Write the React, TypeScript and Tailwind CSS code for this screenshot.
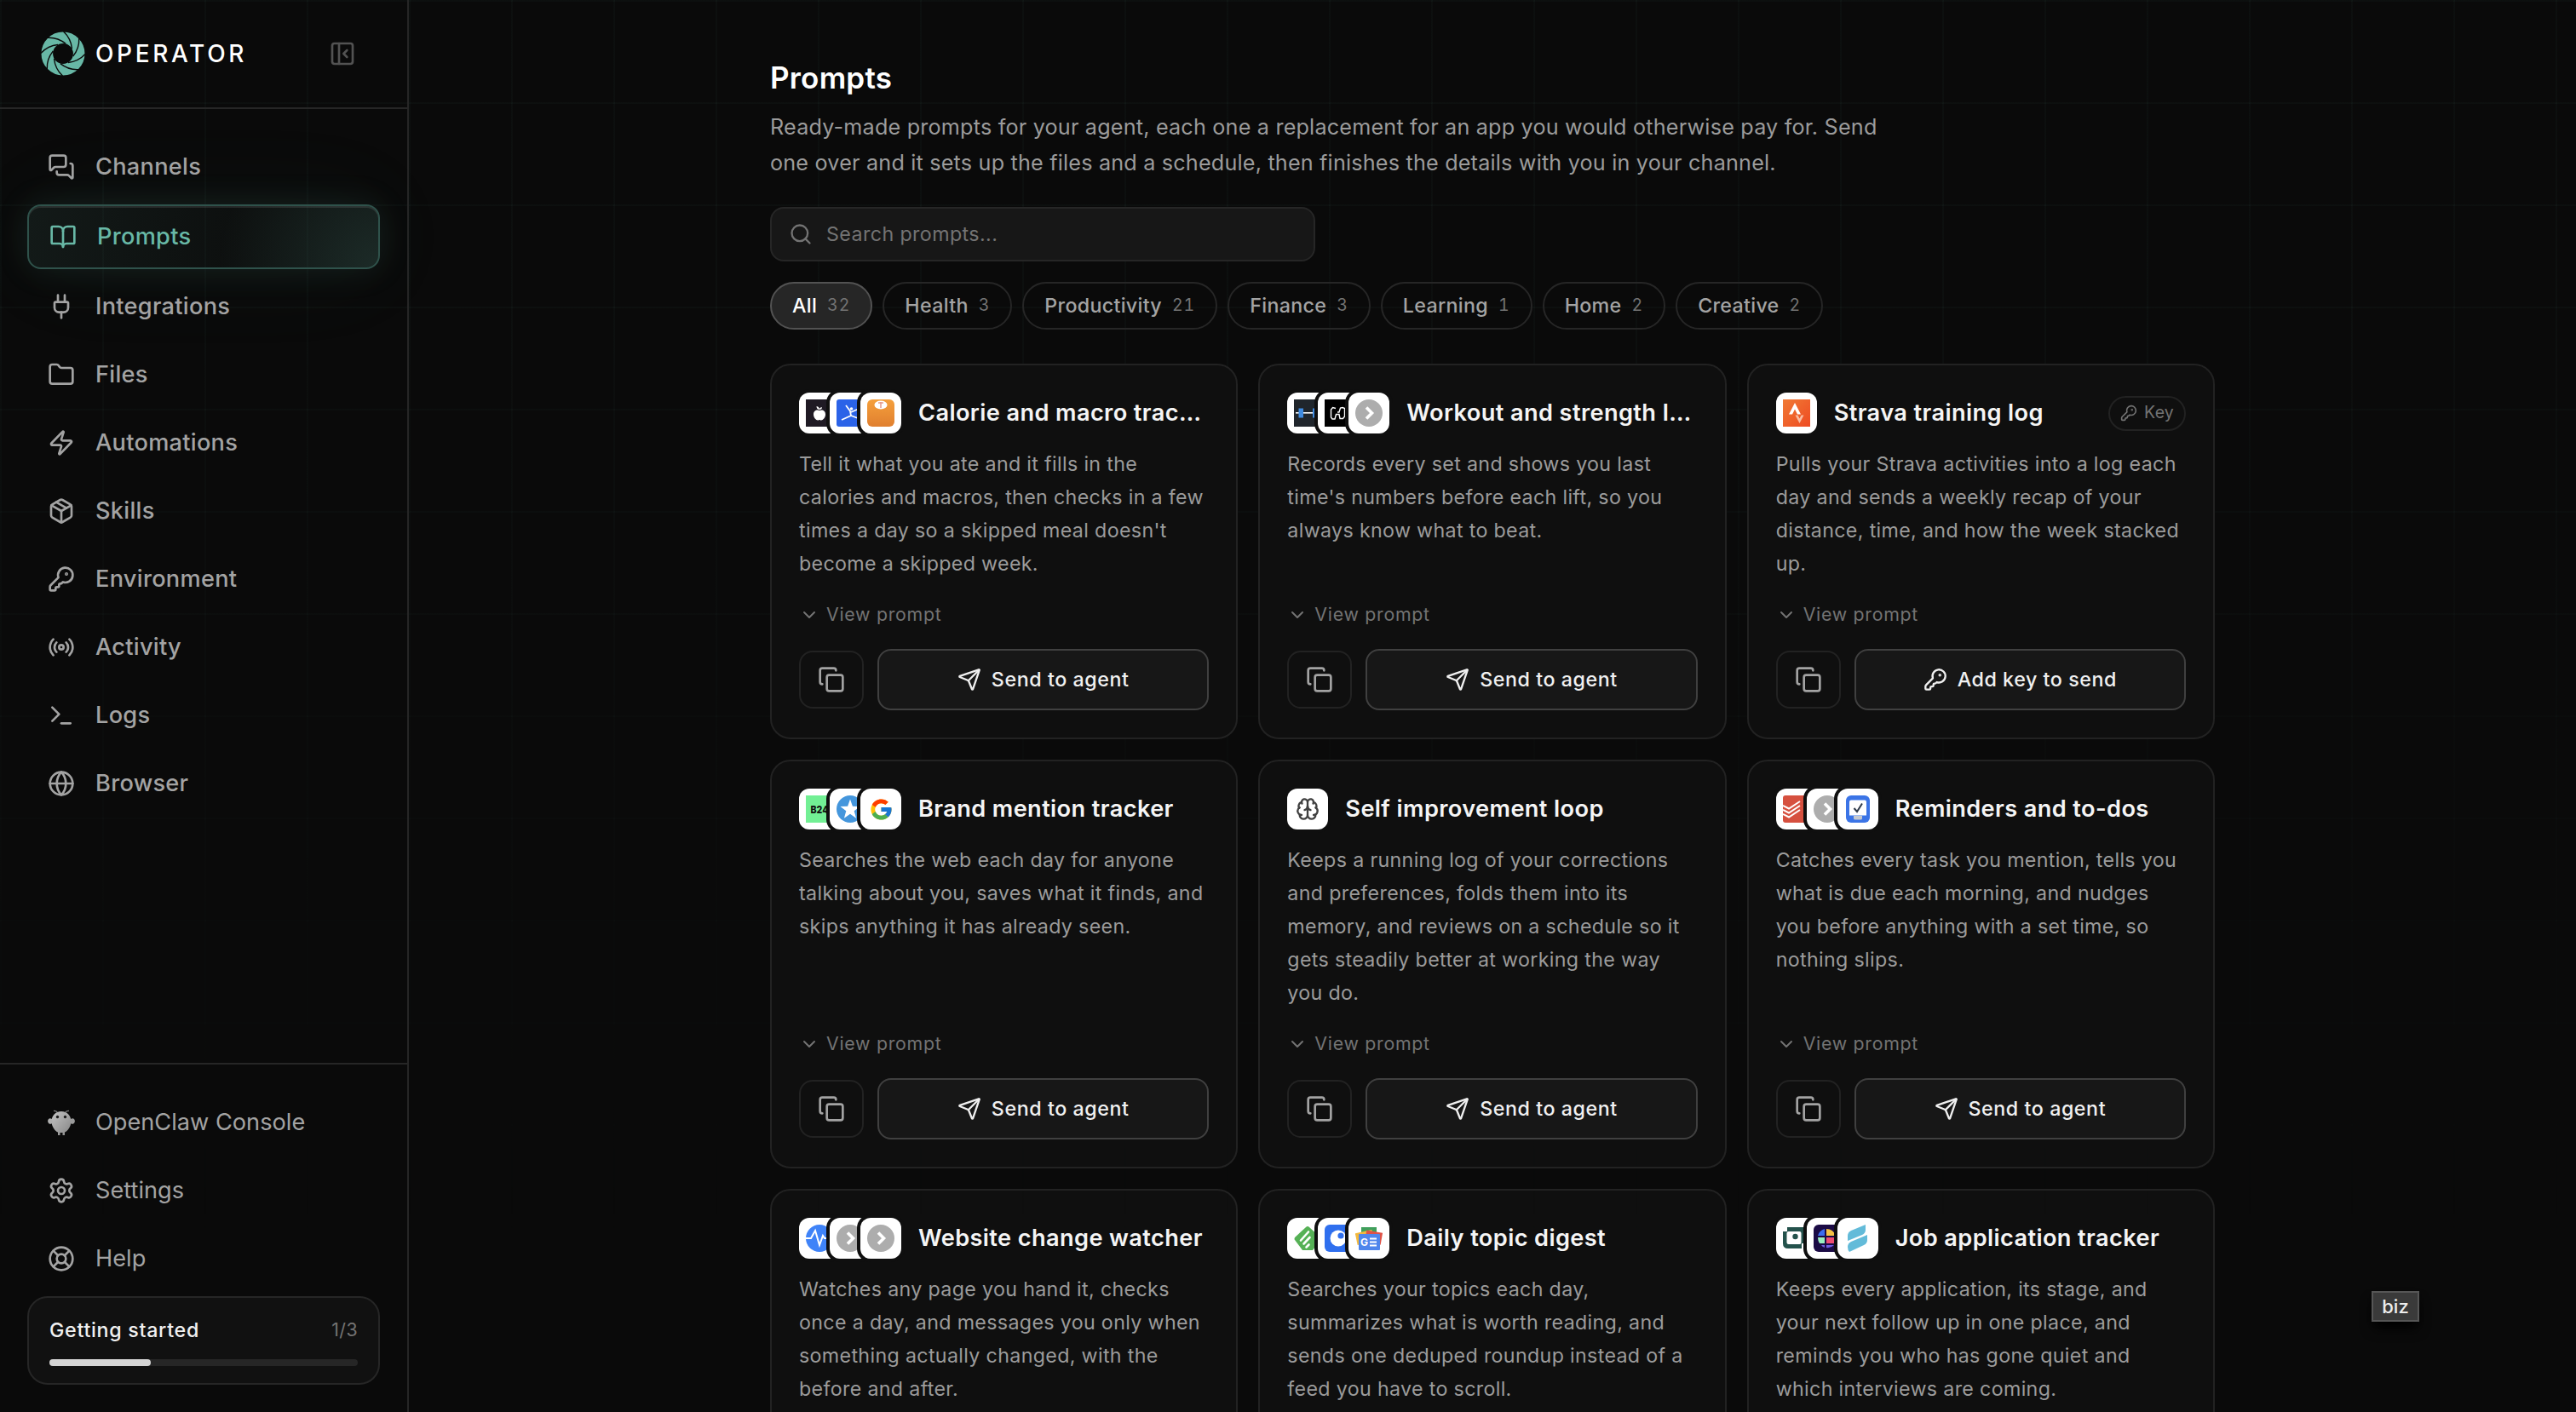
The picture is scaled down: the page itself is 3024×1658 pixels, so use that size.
import type { ComponentType, ReactNode } from 'react';
import {
  BookOpen,
  Brain,
  ChevronDown,
  Copy,
  Folder,
  Globe,
  KeyRound,
  LifeBuoy,
  MessagesSquare,
  Package,
  PanelLeftClose,
  Plug,
  Radio,
  Search,
  Send,
  Settings,
  Terminal,
  Zap,
} from 'lucide-react';
import { FcGoogle } from 'react-icons/fc';
import { clsx } from 'clsx';

type IconType = ComponentType<{ className?: string; strokeWidth?: number }>;

const navItems: { label: string; icon: IconType; active?: boolean }[] = [
  { label: 'Channels', icon: MessagesSquare },
  { label: 'Prompts', icon: BookOpen, active: true },
  { label: 'Integrations', icon: Plug },
  { label: 'Files', icon: Folder },
  { label: 'Automations', icon: Zap },
  { label: 'Skills', icon: Package },
  { label: 'Environment', icon: KeyRound },
  { label: 'Activity', icon: Radio },
  { label: 'Logs', icon: Terminal },
  { label: 'Browser', icon: Globe },
];

const footerItems: { label: string; icon: IconType }[] = [
  { label: 'OpenClaw Console', icon: ClawIcon },
  { label: 'Settings', icon: Settings },
  { label: 'Help', icon: LifeBuoy },
];

const categories = [
  { label: 'All', count: 32 },
  { label: 'Health', count: 3 },
  { label: 'Productivity', count: 21 },
  { label: 'Finance', count: 3 },
  { label: 'Learning', count: 1 },
  { label: 'Home', count: 2 },
  { label: 'Creative', count: 2 },
];

interface Prompt {
  title: string;
  description: string;
  logos: ReactNode[];
  needsKey?: boolean;
}

const prompts: Prompt[] = [
  {
    title: 'Calorie and macro tracker',
    description:
      "Tell it what you ate and it fills in the calories and macros, then checks in a few times a day so a skipped meal doesn't become a skipped week.",
    logos: [<AppleLogo />, <DancerLogo />, <ScaleLogo />],
  },
  {
    title: 'Workout and strength log',
    description:
      "Records every set and shows you last time's numbers before each lift, so you always know what to beat.",
    logos: [<DumbbellLogo />, <HevyLogo />, <FallbackLogo />],
  },
  {
    title: 'Strava training log',
    description:
      'Pulls your Strava activities into a log each day and sends a weekly recap of your distance, time, and how the week stacked up.',
    logos: [<StravaLogo />],
    needsKey: true,
  },
  {
    title: 'Brand mention tracker',
    description:
      'Searches the web each day for anyone talking about you, saves what it finds, and skips anything it has already seen.',
    logos: [<B24Logo />, <StarLogo />, <FcGoogle className="h-[29px] w-[29px]" />],
  },
  {
    title: 'Self improvement loop',
    description:
      'Keeps a running log of your corrections and preferences, folds them into its memory, and reviews on a schedule so it gets steadily better at working the way you do.',
    logos: [<Brain className="h-7 w-7 text-[#404040]" strokeWidth={2} />],
  },
  {
    title: 'Reminders and to-dos',
    description:
      'Catches every task you mention, tells you what is due each morning, and nudges you before anything with a set time, so nothing slips.',
    logos: [<TodoistLogo />, <FallbackLogo />, <ChecklistLogo />],
  },
  {
    title: 'Website change watcher',
    description:
      'Watches any page you hand it, checks once a day, and messages you only when something actually changed, with the before and after.',
    logos: [<PulseLogo />, <FallbackLogo />, <FallbackLogo />],
  },
  {
    title: 'Daily topic digest',
    description:
      'Searches your topics each day, summarizes what is worth reading, and sends one deduped roundup instead of a feed you have to scroll.',
    logos: [<FeedlyLogo />, <InoreaderLogo />, <NewsLogo />],
  },
  {
    title: 'Job application tracker',
    description:
      'Keeps every application, its stage, and your next follow up in one place, and reminds you who has gone quiet and which interviews are coming.',
    logos: [<TealLogo />, <HuntrLogo />, <SimplifyLogo />],
  },
];

export default function App() {
  return (
    <div className="relative flex h-[1658px] w-[3024px] overflow-hidden bg-[#0a0a0a] font-['Inter','Liberation_Sans',sans-serif] text-[#a3a3a3]">
      <div className="pointer-events-none absolute inset-0 bg-[linear-gradient(rgba(107,186,168,0.035)_2px,transparent_2px),linear-gradient(90deg,rgba(107,186,168,0.035)_2px,transparent_2px)] bg-[size:120px_120px] [mask-image:linear-gradient(to_bottom,black_0%,black_20%,transparent_90%)]" />
      <Sidebar />
      <main className="relative flex-1">
        <div className="mx-auto w-[1792px] px-12 pt-16">
          <h1 className="text-[35px] leading-[54px] font-semibold tracking-[0.006em] text-white">Prompts</h1>
          <p className="mt-2.5 h-[85px] w-[1344px] text-[25.2px] leading-[42px] tracking-[0.0075em] text-[#9b9b9b]">
            Ready-made prompts for your agent, each one a replacement for an app you would otherwise pay for. Send one
            over and it sets up the files and a schedule, then finishes the details with you in your channel.
          </p>

          <div className="mt-[30px] flex h-16 w-[640px] items-center gap-4 rounded-2xl border-2 border-[#262626] bg-[#171717] px-5 text-[#737373]">
            <Search className="h-7 w-7" strokeWidth={2} />
            <span className="text-[23.25px] tracking-[0.017em]">Search prompts...</span>
          </div>

          <div className="mt-6 flex gap-3">
            {categories.map((c, i) => (
              <button
                key={c.label}
                className={clsx(
                  'flex h-14 items-center gap-3 rounded-full border-2 px-6 text-[23.25px] font-medium tracking-[0.013em]',
                  i === 0 ? 'border-[#525252] bg-[#262626] text-white' : 'border-[#262626] text-[#a3a3a3]',
                )}
              >
                {c.label}
                <span className="text-[19.5px] font-normal tracking-[0.05em] text-[#737373] tabular-nums">
                  {c.count}
                </span>
              </button>
            ))}
          </div>

          <div className="mt-10 grid grid-cols-3 gap-6">
            {prompts.map((p) => (
              <PromptCard key={p.title} prompt={p} />
            ))}
          </div>
        </div>
      </main>

      <div className="absolute top-[1516px] left-[2784px] flex h-9 w-14 items-center justify-center border-2 border-[#565656] bg-[#3a3a3a] text-[22px] font-medium text-[#ededed] shadow-lg shadow-black">
        biz
      </div>
    </div>
  );
}

function Sidebar() {
  return (
    <aside className="relative flex w-[480px] shrink-0 flex-col border-r-2 border-[#262626]">
      <div className="flex h-32 items-center border-b-2 border-[#262626] pr-[60px] pl-12">
        <OperatorMark />
        <span className="ml-3 text-[28px] font-medium tracking-[0.13em] text-white">OPERATOR</span>
        <PanelLeftClose className="ml-auto h-8 w-8 text-[#525252]" strokeWidth={2} />
      </div>

      <nav className="flex flex-1 flex-col gap-2 px-8 py-8">
        {navItems.map(({ label, icon: Icon, active }) => (
          <a
            key={label}
            className={clsx(
              'flex items-center gap-6 rounded-2xl px-6 text-[27.2px] font-medium tracking-[0.01em]',
              active
                ? 'h-[76px] border-2 border-[#2f524b] bg-[radial-gradient(circle_at_100%_100%,rgba(107,186,168,0.16),transparent_45%),linear-gradient(100deg,rgba(107,186,168,0.09),rgba(107,186,168,0.03)_60%)] text-[#68b8a6] shadow-[0_0_40px_rgba(107,186,168,0.12),0_0_120px_rgba(107,186,168,0.06),inset_0_2px_0_rgba(255,255,255,0.1)]'
                : 'h-[72px]',
            )}
          >
            <Icon className="h-8 w-8" strokeWidth={2} />
            {label}
          </a>
        ))}
      </nav>

      <div className="border-t-2 border-[#262626] p-8">
        <div className="flex flex-col gap-2">
          {footerItems.map(({ label, icon: Icon }) => (
            <a key={label} className="flex h-[72px] items-center gap-6 px-6 text-[27.2px]">
              <Icon className="h-8 w-8" strokeWidth={2} />
              {label}
            </a>
          ))}
        </div>
        <div className="mt-2 h-[104px] rounded-[24px] border-2 border-[#262626] bg-[#111111] px-6 pt-5">
          <div className="flex h-9 items-center justify-between">
            <span className="text-[23.25px] font-medium tracking-[0.03em] text-[#f0f0f0]">Getting started</span>
            <span className="text-[21.3px] tracking-[0.02em] text-[#737373]">1/3</span>
          </div>
          <div className="mt-4 h-2 rounded-full bg-[#262626]">
            <div className="h-2 w-[33%] rounded-full bg-[#d4d4d4]" />
          </div>
        </div>
      </div>
    </aside>
  );
}

function PromptCard({ prompt }: { prompt: Prompt }) {
  return (
    <article className="flex flex-col rounded-[24px] border-2 border-[#222222] bg-[#101010]/90 p-8">
      <div className="flex h-12 items-center">
        <div className="flex">
          {prompt.logos.map((logo, i) => (
            <span
              key={i}
              className="-ml-3 flex h-12 w-12 shrink-0 items-center justify-center rounded-xl bg-white shadow-[0_0_0_4px_#0f0f0f] first:ml-0"
            >
              {logo}
            </span>
          ))}
        </div>
        <h3 className="ml-5 flex-1 truncate text-[27.2px] font-semibold tracking-[0.014em] text-[#f5f5f5]">
          {prompt.title}
        </h3>
        {prompt.needsKey && (
          <span className="ml-5 flex h-[41px] items-center gap-2 rounded-full border-2 border-[#222222] px-3 text-[19.5px] tracking-[0.01em] text-[#737373]">
            <KeyRound className="h-5 w-5" />
            Key
          </span>
        )}
      </div>
      <p className="mt-4 text-[23.25px] leading-[39px] tracking-[0.014em] text-[#9b9b9b]">{prompt.description}</p>
      <button className="mt-auto flex items-center gap-2 pt-6 text-[21.3px] leading-[33px] tracking-[0.034em] text-[#737373]">
        <ChevronDown className="h-6 w-6" />
        View prompt
      </button>
      <div className="mt-6 flex items-center gap-4">
        <button className="flex h-[68px] w-[76px] items-center justify-center rounded-2xl border-2 border-[#222222] text-[#a3a3a3]">
          <Copy className="h-8 w-8" strokeWidth={2} />
        </button>
        <button className="flex h-[72px] flex-1 items-center justify-center gap-3 rounded-2xl border-2 border-[#404040] bg-[#171717] text-[23.25px] font-medium tracking-[0.024em] text-[#f0f0f0]">
          {prompt.needsKey ? <KeyRound className="h-7 w-7" /> : <Send className="h-7 w-7" />}
          {prompt.needsKey ? 'Add key to send' : 'Send to agent'}
        </button>
      </div>
    </article>
  );
}

function OperatorMark() {
  return (
    <svg viewBox="-26 -26 52 52" className="h-13 w-13">
      <circle r="18.7" fill="none" stroke="#68b8a6" strokeWidth="13.6" />
      {[0, 45, 90, 135, 180, 225, 270, 315].map((a) => (
        <path
          key={a}
          d="M0.500 -26C6 -21 9.500 -15 10.500 -6"
          transform={`rotate(${a})`}
          fill="none"
          stroke="#0a0a0a"
          strokeWidth="1.400"
        />
      ))}
    </svg>
  );
}

function ClawIcon({ className }: { className?: string }) {
  return (
    <svg viewBox="0 0 32 32" className={className}>
      <defs>
        <linearGradient id="claw" x1="0" y1="0" x2="1" y2="1">
          <stop offset="0" stopColor="#c4c4c4" />
          <stop offset="1" stopColor="#858585" />
        </linearGradient>
      </defs>
      <path d="M12 5Q10 2 7 2.500M20 5Q22 2 25 2.500" stroke="#8a8a8a" strokeWidth="1.200" fill="none" />
      <path
        d="M16 3C9 3 4.500 8.500 4.500 14.500C4.500 21 9 26.500 12 27.500V31H14.500V28H17.500V31H20V27.500C23 26.500 27.500 21 27.500 14.500C27.500 8.500 23 3 16 3Z"
        fill="url(#claw)"
      />
      <path d="M5 12C1.500 10 -0.500 13 0.300 15.500C1.200 18.500 4.500 18.500 6 16Z" fill="#b0b0b0" />
      <path d="M27 12C30.500 10 32.500 13 31.700 15.500C30.800 18.500 27.500 18.500 26 16Z" fill="#9a9a9a" />
      <circle cx="11.500" cy="9.500" r="1.700" fill="#1c1c1c" />
      <circle cx="20.500" cy="9.500" r="1.700" fill="#1c1c1c" />
    </svg>
  );
}

function Logo({ children }: { children: ReactNode }) {
  return (
    <svg viewBox="0 0 32 32" className="h-8 w-8">
      {children}
    </svg>
  );
}

function AppleLogo() {
  return (
    <Logo>
      <rect width="32" height="32" fill="#1f1a24" />
      <path
        d="M16 13C13 11.500 9 13 9 17.500C9 21.500 12 24.500 14 24.500C15 24.500 15.500 24 16 24C16.500 24 17 24.500 18 24.500C20 24.500 23 21.500 23 17.500C23 13 19 11.500 16 13Z"
        fill="#fff"
      />
      <path
        d="M16 12C16 10 15 8.500 12.500 8C12.500 10.500 14 12 16 12ZM16 12C16 10 17.500 9 19 9.500C19 11 17.500 12 16 12Z"
        fill="#fff"
      />
    </Logo>
  );
}

function DancerLogo() {
  return (
    <Logo>
      <rect width="32" height="32" rx="3" fill="#2b63e8" />
      <circle cx="17.500" cy="11" r="1.800" fill="#fff" />
      <path
        d="M11 7L15.500 13L17 15L25 11.500M16 14L17 19L6 24M17 19L25 22"
        stroke="#fff"
        strokeWidth="1.800"
        fill="none"
      />
    </Logo>
  );
}

function ScaleLogo() {
  return (
    <Logo>
      <defs>
        <linearGradient id="scale" x1="0" y1="0" x2="0" y2="1">
          <stop offset="0" stopColor="#f5a03c" />
          <stop offset="1" stopColor="#e07f2f" />
        </linearGradient>
      </defs>
      <rect width="32" height="32" rx="6" fill="url(#scale)" />
      <ellipse cx="16" cy="6.500" rx="7.500" ry="5" fill="#fff" />
      <path d="M16 3V10M13 4H19" stroke="#e59a8a" strokeWidth="1.500" />
    </Logo>
  );
}

function DumbbellLogo() {
  return (
    <Logo>
      <rect width="32" height="32" fill="#20262c" />
      <rect x="2" y="15" width="28" height="1.600" fill="#fff" />
      <rect x="5.500" y="10.500" width="5.500" height="11" fill="#3f8be0" />
      <rect x="22" y="10.500" width="5.500" height="11" fill="#3f8be0" />
    </Logo>
  );
}

function HevyLogo() {
  return (
    <Logo>
      <rect width="32" height="32" fill="#000" />
      <path
        d="M13 10.500L9.500 9.500L7.500 12V21L9 23H12L13.500 17.500H17L18 22.500H21.500L23.500 20V10.500L21 9.500L18.500 10L17 15H15"
        stroke="#fff"
        strokeWidth="1.400"
        fill="none"
      />
    </Logo>
  );
}

function FallbackLogo() {
  return (
    <Logo>
      <circle cx="16" cy="16" r="16" fill="#adadad" />
      <path d="M13 9.500L19.500 16L13 22.500" stroke="#fff" strokeWidth="3.600" fill="none" />
    </Logo>
  );
}

function StravaLogo() {
  return (
    <Logo>
      <defs>
        <linearGradient id="strava" x1="0" y1="0" x2="1" y2="1">
          <stop offset="0" stopColor="#f07a35" />
          <stop offset="1" stopColor="#ee4b22" />
        </linearGradient>
      </defs>
      <rect width="32" height="32" fill="url(#strava)" />
      <path d="M7 17.500L14 4L21 17.500H17L14 11.500L11 17.500Z" fill="#fff" />
      <path d="M14.500 18.500H17.500L19.500 22.500L21.500 18.500H24.500L19.500 28Z" fill="#f9bda3" />
    </Logo>
  );
}

function B24Logo() {
  return (
    <Logo>
      <rect width="32" height="32" fill="#72ef94" />
      <text x="5.500" y="20.500" fontSize="12" fontWeight="800" fill="#111" textLength="21" lengthAdjust="spacingAndGlyphs">
        B24
      </text>
    </Logo>
  );
}

function StarLogo() {
  return (
    <Logo>
      <circle cx="16" cy="16" r="16" fill="#4496dc" />
      <path
        d="M16 4.500L18.900 12.800L27.500 13L20.700 18.300L23.100 26.700L16 21.800L8.900 26.700L11.300 18.300L4.500 13L13.100 12.800Z"
        fill="#fff"
      />
    </Logo>
  );
}

function TodoistLogo() {
  return (
    <Logo>
      <rect width="32" height="32" rx="3" fill="#d6503f" />
      <path d="M0 12L7 15.500L20 7M0 17L7 20.500L20 12M0 22L7 25.500L20 17" stroke="#fff" strokeWidth="2" fill="none" />
    </Logo>
  );
}

function ChecklistLogo() {
  return (
    <Logo>
      <rect x="2" width="28" height="32" rx="6" fill="#3b74e6" />
      <path d="M8 5.500H24Q26 5.500 26 7.500V23.500H6V7.500Q6 5.500 8 5.500Z" fill="#fff" />
      <path d="M11 24H21V27Q21 28.500 19 28.500H13Q11 28.500 11 27Z" fill="#c5c9cf" />
      <path d="M11.500 15L15 19L21 9.500" stroke="#2f3a4a" strokeWidth="2" fill="none" />
    </Logo>
  );
}

function PulseLogo() {
  return (
    <Logo>
      <circle cx="16" cy="16" r="16" fill="#3f83f8" />
      <path d="M0 16H6L11 7L16 24L20 13L22 16H32" stroke="#fff" strokeWidth="2" fill="none" />
    </Logo>
  );
}

function FeedlyLogo() {
  return (
    <Logo>
      <path d="M14 3Q16 1 18 3L31 15Q32 17 31 18L22 30H10L1 18Q0 17 1 15Z" fill="#56b156" />
      <path
        d="M8 18.500L17 8.500M11.500 22.500L18.500 15M14.500 26.500L17.500 23.500"
        stroke="#fff"
        strokeWidth="2.600"
        strokeLinecap="round"
      />
    </Logo>
  );
}

function InoreaderLogo() {
  return (
    <Logo>
      <rect width="32" height="32" rx="6" fill="#2f6fee" />
      <circle cx="16" cy="16" r="9.500" fill="#fff" />
      <circle cx="19" cy="13" r="3.600" fill="#2f6fee" />
    </Logo>
  );
}

function NewsLogo() {
  return (
    <Logo>
      <rect x="7" y="3" width="18" height="14" fill="#3f9f5c" />
      <rect x="1" y="8" width="20" height="14" fill="#f3b93d" transform="rotate(-12 11 15)" />
      <rect x="12" y="8" width="19" height="14" fill="#de5246" transform="rotate(10 21 15)" />
      <rect x="4" y="11" width="25" height="19" rx="1" fill="#4f86ec" />
      <text x="6" y="25" fontSize="12" fontWeight="700" fill="#fff">
        G
      </text>
      <path d="M17 16.500H25M17 20.500H25M17 24.500H25" stroke="#fff" strokeWidth="1.800" />
    </Logo>
  );
}

function TealLogo() {
  return (
    <Logo>
      <path d="M5 3H32V22H22V28H6Q0 28 0 22V8H5Z" fill="#24524c" />
      <rect x="4.500" y="8" width="17" height="15" rx="2" fill="#fff" />
      <circle cx="14.500" cy="14" r="3.200" fill="#24524c" />
    </Logo>
  );
}

function HuntrLogo() {
  return (
    <Logo>
      <rect width="32" height="32" rx="6" fill="#1b0b45" />
      <path d="M13 5V13H5Q6.500 7 13 5Z" fill="#3c6df0" />
      <path d="M15 5Q23 5 26 13H15Z" fill="#f6c244" />
      <path d="M5 15H13V22H7Q5 19 5 15Z" fill="#9af0c0" />
      <path d="M15 15H27Q27 19 25 22H15Z" fill="#ef4c72" />
      <path d="M9 24H13V27Q10 26 9 24ZM15 24H24Q20 28 15 27Z" fill="#6f5be0" />
    </Logo>
  );
}

function SimplifyLogo() {
  return (
    <Logo>
      <path d="M4 13Q4 9 8 7L25 0V6Q25 10 21 12L4 19Z" fill="#63bbd9" />
      <path d="M4 26Q4 22 8 20L27 12V18Q27 22 23 24L6 32Q4 30 4 26Z" fill="#63bbd9" />
    </Logo>
  );
}
